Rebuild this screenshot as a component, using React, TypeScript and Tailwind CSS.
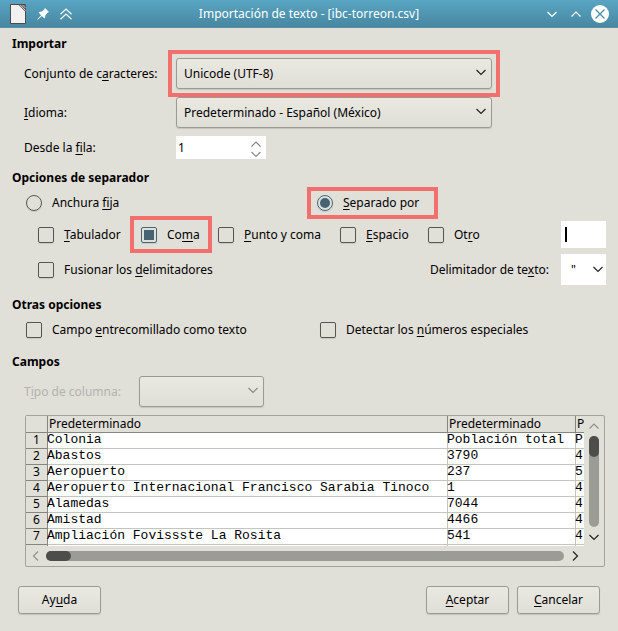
import React, { useState } from "react";

type CaptionProps = { before?: string; mnemonic: string; after?: string };
type ToggleProps = CaptionProps & { checked?: boolean; className?: string };

/** Caption with its keyboard mnemonic underlined. */
function Caption({ before = "", mnemonic, after = "" }: CaptionProps) {
  return (
    <span className="whitespace-pre">
      {before}
      <span className="underline underline-offset-2">{mnemonic}</span>
      {after}
    </span>
  );
}

function Chevron({ dir, className = "" }: { dir: "up" | "down" | "left" | "right"; className?: string }) {
  const paths = {
    up: "M1.5 8.5 L6 4 L10.5 8.5",
    down: "M1.5 4 L6 8.5 L10.5 4",
    left: "M8 1.5 L3.5 6 L8 10.5",
    right: "M4 1.5 L8.5 6 L4 10.5",
  };
  return (
    <svg viewBox="0 0 12 12" className={`size-3 shrink-0 ${className}`} fill="none" stroke="currentColor" strokeWidth="1.2" aria-hidden="true">
      <path d={paths[dir]} />
    </svg>
  );
}

function Combo({ id, value, className = "", disabled = false }: { id: string; value: string; className?: string; disabled?: boolean }) {
  return (
    <div className={`relative ${className}`}>
      <select
        id={id}
        disabled={disabled}
        className="block h-[31px] w-full appearance-none rounded-[3px] border border-[#9b9b96] bg-linear-to-b from-[#e9e8e1] to-[#dfded7] pr-7 pl-[7px] text-black shadow-[0_1px_1px_#c4c3bd] disabled:opacity-100"
      >
        <option>{value}</option>
      </select>
      <Chevron dir="down" className={`pointer-events-none absolute top-2 right-[5px] ${disabled ? "text-[#888883]" : "text-[#222]"}`} />
    </div>
  );
}

function Check({ before, mnemonic, after, checked = false, className = "" }: ToggleProps) {
  const [on, setOn] = useState(checked);
  return (
    <label className={`flex items-center gap-[10px] ${className}`}>
      <span className="grid size-4 shrink-0">
        <input
          type="checkbox"
          checked={on}
          onChange={() => setOn(!on)}
          className="peer col-start-1 row-start-1 size-4 appearance-none rounded-[2px] border border-[#555552] shadow-[0_1px_1px_#c8c7c1] checked:border-[#44687a]"
        />
        <span className="pointer-events-none col-start-1 row-start-1 m-[3px] hidden bg-[#456373] peer-checked:block" />
      </span>
      <Caption before={before} mnemonic={mnemonic} after={after} />
    </label>
  );
}

function Radio({ before, mnemonic, after, checked = false, className = "" }: ToggleProps) {
  return (
    <label className={`flex items-center gap-[10px] ${className}`}>
      <span className="grid size-4 shrink-0">
        <input
          type="radio"
          name="separator"
          defaultChecked={checked}
          className="peer col-start-1 row-start-1 size-4 appearance-none rounded-full border border-[#555552] shadow-[0_1px_1px_#c8c7c1] checked:border-[#44687a]"
        />
        <span className="pointer-events-none col-start-1 row-start-1 m-[3px] hidden rounded-full bg-[#456373] peer-checked:block" />
      </span>
      <Caption before={before} mnemonic={mnemonic} after={after} />
    </label>
  );
}

function Heading({ children, className = "" }: { children: React.ReactNode; className?: string }) {
  return <h2 className={`h-5 leading-5 font-bold ${className}`}>{children}</h2>;
}

function PushButton({ before, mnemonic, after }: CaptionProps) {
  return (
    <button className="h-7 w-[83px] rounded-[3px] border border-[#9b9b96] bg-linear-to-b from-[#e9e8e1] to-[#dfded7] shadow-[0_1px_1px_#c4c3bd]">
      <Caption before={before} mnemonic={mnemonic} after={after} />
    </button>
  );
}

const rows = [
  ["Colonia", "Población total", "P"],
  ["Abastos", "3790", "4"],
  ["Aeropuerto", "237", "5"],
  ["Aeropuerto Internacional Francisco Sarabia Tinoco", "1", "4"],
  ["Alamedas", "7044", "4"],
  ["Amistad", "4466", "4"],
  ["Ampliación Fovissste La Rosita", "541", "4"],
  ["Ampliación", "", ""],
];

function TitleBar() {
  return (
    <header className="flex h-7 items-center border-b border-[#5f8fa3] bg-linear-to-b from-[#59a5c3] to-[#4787a1] px-[9px] text-white">
      <div className="flex flex-1 items-center gap-[10px]">
        <svg viewBox="0 0 18 20" className="h-5 w-[18px]" aria-hidden="true">
          <path d="M1.500 .5H16.500V19.500H1.500Z" fill="#f1f1f1" stroke="#4b4b4b" />
          <path d="M9.500 1H16.500V8Z" fill="#6b6b6b" />
          <path d="M11 1L16.500 6.500M13.500 1L16.500 4" stroke="#ccc" strokeWidth=".8" />
        </svg>
        <svg viewBox="0 0 12 12" className="size-3" aria-hidden="true">
          <path d="M8 0L12 4L10.500 4.800L8.500 7L8 10L7.200 10.200L4.800 7.900L.8 11.700L.3 11.200L4.100 7.200L1.800 4.800L2 4L5 3.500L7.200 1.500Z" fill="white" />
        </svg>
        <svg viewBox="0 0 12 12" className="ml-px size-3" fill="none" stroke="white" strokeWidth="1.200" aria-hidden="true">
          <path d="M.5 6.200L6 1L11.500 6.200M.5 11.200L6 6L11.500 11.200" />
        </svg>
      </div>
      <h1>Importación de texto - [ibc-torreon.csv]</h1>
      <div className="flex flex-1 items-center justify-end gap-3">
        <button aria-label="Minimizar"><Chevron dir="down" className="block" /></button>
        <button aria-label="Maximizar"><Chevron dir="up" className="block" /></button>
        <button aria-label="Cerrar" className="-ml-[3px] grid size-[18px] place-items-center rounded-full bg-white text-[#4a8ba6]">
          <svg viewBox="0 0 10 10" className="size-[10px]" stroke="currentColor" strokeWidth="1.300" aria-hidden="true">
            <path d="M.5 .5L9.500 9.500M9.500 .5L.5 9.500" />
          </svg>
        </button>
      </div>
    </header>
  );
}

function Preview() {
  return (
    <div className="mt-2 mr-px ml-[13px] flex flex-col overflow-hidden rounded-[2px] border border-[#a3a39e]">
      <div className="flex h-[130px]">
        <div className="min-w-0 flex-1 overflow-hidden">
          <table className="w-[748px] table-fixed border-separate border-spacing-0 bg-white">
            <colgroup>
              <col className="w-[22px]" />
              <col className="w-[400px]" />
              <col className="w-32" />
              <col />
            </colgroup>
            <thead>
              <tr className="h-[17px] bg-[#e0dfd8] text-left leading-4">
                <th className="border-r border-b border-[#868680] p-0" />
                {[0, 1, 2].map((n) => (
                  <th key={n} className="border-r border-b border-[#868680] p-0 pl-px font-normal">Predeterminado</th>
                ))}
              </tr>
            </thead>
            <tbody>
              {rows.map((cells, i) => (
                <tr key={i} className="h-4">
                  <th className="border-r border-b border-[#868680] bg-[#e0dfd8] p-0 text-center font-normal">
                    <div className="-mt-px h-4 leading-[15px]">{i + 1}</div>
                  </th>
                  {cells.map((cell, n) => (
                    <td key={n} className="border-r border-b border-[#c4c4c2] p-0 font-[Liberation_Mono,monospace] text-[13px] leading-[15px] whitespace-pre">
                      <div className="-mt-px -ml-px h-4">{cell}</div>
                    </td>
                  ))}
                </tr>
              ))}
            </tbody>
          </table>
        </div>
        <div className="flex w-5 flex-col items-center pt-1 pb-[3px]">
          <Chevron dir="up" className="text-[#91918c]" />
          <div className="my-1 w-[10px] flex-1 rounded-full bg-[#9b9c95]">
            <div className="h-[21px] rounded-full bg-[#4d4e4b]" />
          </div>
          <Chevron dir="down" className="text-[#222]" />
        </div>
      </div>
      <div className="flex h-5 items-center pr-[23px] pl-1">
        <Chevron dir="left" className="text-[#91918c]" />
        <div className="mr-[5px] ml-1 h-[10px] flex-1 rounded-full bg-[#9b9c95]">
          <div className="h-full w-[25px] rounded-full bg-[#4d4e4b]" />
        </div>
        <Chevron dir="right" className="text-[#222]" />
      </div>
    </div>
  );
}

export default function App() {
  return (
    <div className="min-h-screen bg-[#e0dfd8] font-[Noto_Sans,sans-serif] text-[12px] leading-4 text-black">
      <TitleBar />
      <main className="px-3 pt-[6px] pb-4">
        <Heading>Importar</Heading>
        <div className="mt-1 grid grid-cols-[152px_316px] items-center gap-y-2 pl-3">
          <label htmlFor="charset"><Caption before="Conjunto de c" mnemonic="a" after="racteres:" /></label>
          <Combo id="charset" value="Unicode (UTF-8)" className="outline-4 outline-offset-4 outline-[#f1706d]" />
          <label htmlFor="language"><Caption mnemonic="I" after="dioma:" /></label>
          <Combo id="language" value="Predeterminado - Español (México)" />
          <label htmlFor="row"><Caption before="Desde la " mnemonic="f" after="ila:" /></label>
          <div className="flex h-[23px] w-[90px] items-center bg-white pr-1">
            <input id="row" type="text" inputMode="numeric" defaultValue="1" className="h-full min-w-0 flex-1 bg-transparent pl-[2px] outline-none" />
            <div className="flex flex-col text-[#888883]">
              <button aria-label="Aumentar" className="h-[10px]"><Chevron dir="up" className="block" /></button>
              <button aria-label="Disminuir" className="h-[10px]"><Chevron dir="down" className="block" /></button>
            </div>
          </div>
        </div>

        <Heading className="mt-[9px]">Opciones de separador</Heading>
        <div className="mt-[3px] flex h-6 items-center pl-[14px]">
          <Radio before="Anchura " mnemonic="f" after="ija" className="w-[285px]" />
          <Radio mnemonic="S" after="eparado por" checked className="h-6 pr-[15px] pl-[6px] outline-4 outline-[#f1706d]" />
        </div>
        <div className="mt-[6px] flex h-[27px] items-center pl-[26px]">
          <Check mnemonic="T" after="abulador" className="w-24" />
          <Check before="Co" mnemonic="m" after="a" checked className="mr-[10px] h-[29px] w-[74px] pl-[7px] outline-4 outline-[#f1706d]" />
          <Check mnemonic="P" after="unto y coma" className="w-[122px]" />
          <Check mnemonic="E" after="spacio" className="w-[88px]" />
          <Check before="Ot" mnemonic="r" after="o" />
          <div className="relative ml-auto">
            <input aria-label="Otro separador" className="block h-[27px] w-[45px] bg-white px-1 outline-none" />
            <span className="pointer-events-none absolute top-[6px] left-1 h-[15px] w-[2px] bg-black" />
          </div>
        </div>
        <div className="mt-[6px] flex h-[31px] items-center pl-[26px]">
          <Check before="Fusionar los " mnemonic="d" after="elimitadores" />
          <label htmlFor="delimiter" className="mr-3 ml-auto"><Caption before="Delimitador de te" mnemonic="x" after="to:" /></label>
          <div className="relative">
            <select id="delimiter" className="block h-[31px] w-[45px] appearance-none bg-white pl-[10px]">
              <option>"</option>
            </select>
            <Chevron dir="down" className="pointer-events-none absolute top-[9px] right-[2px] text-[#222]" />
          </div>
        </div>

        <Heading className="mt-[10px]">Otras opciones</Heading>
        <div className="mt-[7px] flex h-4 items-center pl-[14px]">
          <Check before="Campo " mnemonic="e" after="ntrecomillado como texto" className="w-[294px]" />
          <Check before="Detectar los " mnemonic="n" after="úmeros especiales" />
        </div>

        <Heading className="mt-[14px]">Campos</Heading>
        <div className="mt-1 flex items-center pl-3">
          <label htmlFor="coltype" className="w-[115px] text-[#b4b3ad]"><Caption before="T" mnemonic="i" after="po de columna:" /></label>
          <Combo id="coltype" value="" disabled className="w-[125px]" />
        </div>
        <Preview />

        <footer className="mx-[6px] mt-[19px] flex gap-2">
          <PushButton before="Ay" mnemonic="u" after="da" />
          <span className="flex-1" />
          <PushButton mnemonic="A" after="ceptar" />
          <PushButton mnemonic="C" after="ancelar" />
        </footer>
      </main>
    </div>
  );
}
